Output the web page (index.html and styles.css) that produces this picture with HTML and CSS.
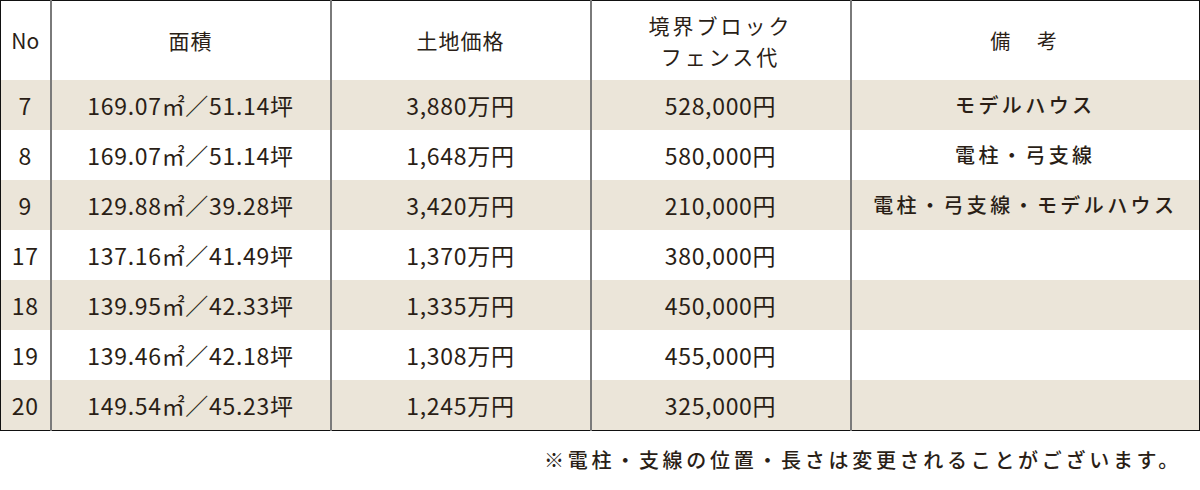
FILE: index.html
```html
<!DOCTYPE html>
<html lang="ja">
<head>
<meta charset="utf-8">
<link rel="stylesheet" href="styles.css">
</head>
<body>
<table class="lots">
  <colgroup>
    <col class="c-no"><col class="c-area"><col class="c-price"><col class="c-fence"><col class="c-note">
  </colgroup>
  <thead>
    <tr>
      <th class="no">No</th>
      <th>面積</th>
      <th>土地価格</th>
      <th class="fence">境界ブロック<br>フェンス代</th>
      <th class="note">備　考</th>
    </tr>
  </thead>
  <tbody>
    <tr class="alt"><td class="no">7</td><td>169.07㎡／51.14坪</td><td>3,880万円</td><td>528,000円</td><td class="note">モデルハウス</td></tr>
    <tr><td class="no">8</td><td>169.07㎡／51.14坪</td><td>1,648万円</td><td>580,000円</td><td class="note">電柱・弓支線</td></tr>
    <tr class="alt"><td class="no">9</td><td>129.88㎡／39.28坪</td><td>3,420万円</td><td>210,000円</td><td class="note">電柱・弓支線・モデルハウス</td></tr>
    <tr><td class="no">17</td><td>137.16㎡／41.49坪</td><td>1,370万円</td><td>380,000円</td><td class="note"></td></tr>
    <tr class="alt"><td class="no">18</td><td>139.95㎡／42.33坪</td><td>1,335万円</td><td>450,000円</td><td class="note"></td></tr>
    <tr><td class="no">19</td><td>139.46㎡／42.18坪</td><td>1,308万円</td><td>455,000円</td><td class="note"></td></tr>
    <tr class="alt"><td class="no">20</td><td>149.54㎡／45.23坪</td><td>1,245万円</td><td>325,000円</td><td class="note"></td></tr>
  </tbody>
</table>
<p class="footnote">※電柱・支線の位置・長さは変更されることがございます。</p>
</body>
</html>
```
FILE: styles.css
```css
html, body {
  margin: 0;
  padding: 0;
  background: #ffffff;
}
body {
  font-family: "Noto Sans CJK JP", "Noto Sans", sans-serif;
  color: #2a1e16;
  width: 1200px;
}
.lots {
  width: 1199px;
  border-collapse: collapse;
  border: 1px solid #111;
  table-layout: fixed;
}
.c-no { width: 50px; }
.c-area { width: 280px; }
.c-price { width: 260px; }
.c-fence { width: 260px; }
.c-note { width: 349px; }
.lots th, .lots td {
  border-left: 2px solid #7a7a7a;
  text-align: center;
  vertical-align: middle;
  padding: 0;
}
.lots th:first-child, .lots td:first-child {
  border-left: 1px solid #111;
}
.lots th {
  height: 79px;
  font-weight: 400;
  font-size: 21px;
  line-height: 31px;
  letter-spacing: 1px;
}
.lots th.no { font-size: 21px; letter-spacing: 0; }
.lots th.fence { letter-spacing: 3px; }
.lots td {
  height: 50px;
  font-size: 23px;
  font-weight: 400;
  letter-spacing: 0.7px;
  line-height: 1;
}
.lots td.note, .lots th.note {
  font-size: 20px;
  font-weight: 500;
  letter-spacing: 3.4px;
}
.lots th.note { font-weight: 400; }
.lots tr.alt td {
  background: #ebe5d9;
}
.footnote {
  margin: 0;
  padding: 14px 18px 0 0;
  text-align: right;
  font-size: 20px;
  font-weight: 500;
  letter-spacing: 3.7px;
  line-height: 30px;
}
```
